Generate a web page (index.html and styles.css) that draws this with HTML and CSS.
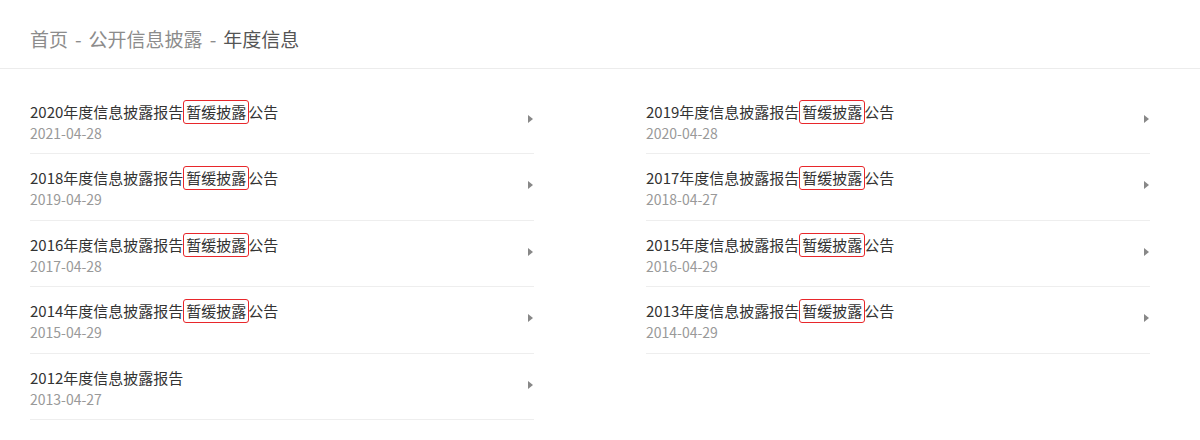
FILE: index.html
```html
<!DOCTYPE html>
<html lang="zh-CN">
<head>
    <meta charset="UTF-8">
    <title>年度信息</title>
    <link rel="stylesheet" href="styles.css">
</head>
<body>
    <div class="crumbs">
        <a href="#">首页</a><span class="sep">-</span><a href="#">公开信息披露</a><span class="sep">-</span><span class="current">年度信息</span>
    </div>

    <ul class="report-list">
        <li><a href="#"><div class="title">2020年度信息披露报告<span class="mark">暂缓披露</span>公告</div><div class="date">2021-04-28</div></a></li>
        <li><a href="#"><div class="title">2019年度信息披露报告<span class="mark">暂缓披露</span>公告</div><div class="date">2020-04-28</div></a></li>
        <li><a href="#"><div class="title">2018年度信息披露报告<span class="mark">暂缓披露</span>公告</div><div class="date">2019-04-29</div></a></li>
        <li><a href="#"><div class="title">2017年度信息披露报告<span class="mark">暂缓披露</span>公告</div><div class="date">2018-04-27</div></a></li>
        <li><a href="#"><div class="title">2016年度信息披露报告<span class="mark">暂缓披露</span>公告</div><div class="date">2017-04-28</div></a></li>
        <li><a href="#"><div class="title">2015年度信息披露报告<span class="mark">暂缓披露</span>公告</div><div class="date">2016-04-29</div></a></li>
        <li><a href="#"><div class="title">2014年度信息披露报告<span class="mark">暂缓披露</span>公告</div><div class="date">2015-04-29</div></a></li>
        <li><a href="#"><div class="title">2013年度信息披露报告<span class="mark">暂缓披露</span>公告</div><div class="date">2014-04-29</div></a></li>
        <li><a href="#"><div class="title">2012年度信息披露报告</div><div class="date">2013-04-27</div></a></li>
    </ul>
</body>
</html>
```

FILE: styles.css
```css
* {
    margin: 0;
    padding: 0;
    box-sizing: border-box;
}

body {
    background: #fff;
    color: #333;
    font-family: "Noto Sans CJK SC", "Noto Sans", sans-serif;
}

a {
    color: inherit;
    text-decoration: none;
}

.crumbs {
    height: 69px;
    padding: 25px 0 0 30px;
    font-size: 19px;
    line-height: 28px;
    color: #8c8c8c;
    border-bottom: 1px solid #ececec;
}

.crumbs .sep {
    padding: 0 7px;
}

.crumbs .current {
    color: #555;
}

.report-list {
    list-style: none;
    display: grid;
    grid-template-columns: 504px 504px;
    column-gap: 112px;
    padding: 18.5px 0 0 30px;
}

.report-list li {
    height: 66.5px;
    border-bottom: 1px solid #eeeeee;
}

.report-list li a {
    display: block;
    position: relative;
    height: 100%;
    padding-top: 12px;
}

.report-list li a::after {
    content: "";
    position: absolute;
    right: 1px;
    top: 27px;
    border-left: 5px solid #888;
    border-top: 4.5px solid transparent;
    border-bottom: 4.5px solid transparent;
}

.title {
    font-size: 15px;
    line-height: 24px;
    color: #333;
}

.mark {
    display: inline-block;
    line-height: 22px;
    padding: 0 2px 0 2px;
    margin: 0 -1px 0 0;
    border: 1.5px solid #e8272b;
    border-radius: 3px;
}

.date {
    font-size: 14px;
    line-height: 18px;
    color: #999;
}
```
